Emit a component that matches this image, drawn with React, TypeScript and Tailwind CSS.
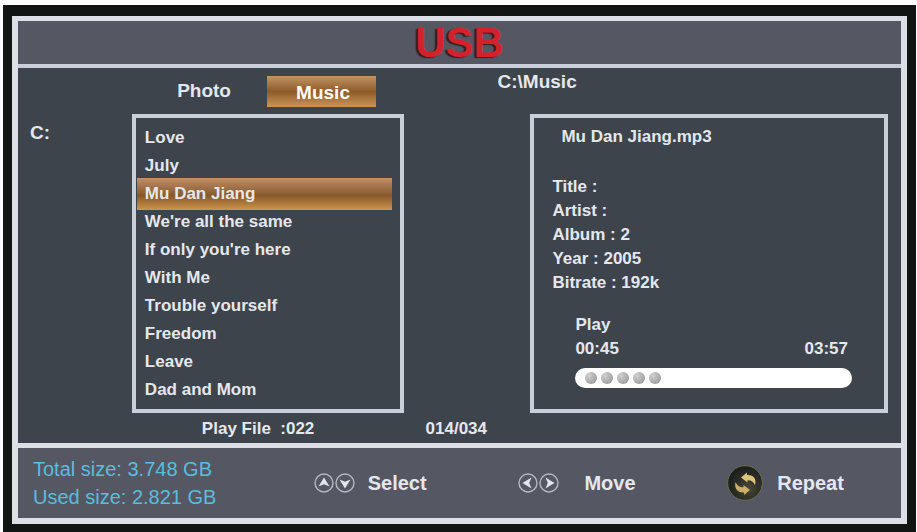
import { useState } from "react"

const songs = [
    'Love',
    'July',
    'Mu Dan Jiang',
    "We're all the same",
    "If only you're here",
    'With Me',
    'Trouble yourself',
    'Freedom',
    'Leave',
    'Dad and Mom'
]

type Direction = 'up' | 'down' | 'left' | 'right'

const rotations: Record<Direction, number> = {
    up: 0,
    right: 90,
    down: 180,
    left: 270
}

function ArrowIcon({ direction }: { direction: Direction }) {
    return (
        <svg width="20" height="20" viewBox="0 0 20 20" fill="none" aria-hidden="true">
            <circle cx="10" cy="10" r="9" stroke="#b4b8c2" strokeWidth="1.4" />
            <path
                d="M10 4.5 L15.5 13.5 L10 11.2 L4.5 13.5 Z"
                fill="#e2e5ec"
                transform={`rotate(${rotations[direction]} 10 10)`}
            />
        </svg>
    )
}

function RepeatIcon() {
    return (
        <svg width="36" height="38" viewBox="0 0 36 38" fill="none" aria-hidden="true">
            <defs>
                <radialGradient id="disc" cx="0.6" cy="0.65" r="0.6">
                    <stop offset="0" stopColor="#4a4838" />
                    <stop offset="0.6" stopColor="#2c2d26" />
                    <stop offset="1" stopColor="#1c201d" />
                </radialGradient>
            </defs>
            <circle cx="18" cy="19" r="17.3" fill="url(#disc)" stroke="#6b6a4c" strokeWidth="1" />
            <path d="M14 13.5 L20 8.5 L20 11 C26 10.5 30 14.5 28 21 C26.5 17.5 24 16 20.5 16.2 L20.5 18.5 Z" fill="#dcc47c" />
            <path d="M23 26 L17 31 L17 28.5 C10.5 29 7 24.5 8.5 18 C10 21.5 13 23.5 16.5 23.3 L16.5 21 Z" fill="#c8b068" />
        </svg>
    )
}

function Progress({ value }: { value: number }) {
    return (
        <div
            role="progressbar"
            aria-label="Playback"
            aria-valuenow={value}
            className="flex h-5 items-center gap-1 rounded-full bg-white px-[10px]"
        >
            {[1, 2, 3, 4, 5].map(dot => (
                <span
                    key={dot}
                    className="size-3 rounded-full bg-radial-[at_35%_30%] from-[#d2d2d2] to-[#8c8c8c]"
                />
            ))}
        </div>
    )
}

export default function App() {
    const [activeSong, setActiveSong] = useState('Mu Dan Jiang')
    const [tab, setTab] = useState('Music')

    return (
        <div className="flex min-h-screen flex-col bg-white pt-[5px] pl-[3px] pr-px font-['Liberation_Sans',Arial,sans-serif] font-bold text-[#e4e8ee]">
            <div className="flex flex-1 flex-col bg-[#111514] px-[9px] pt-[11px] pb-2">
                <div className="flex flex-1 flex-col border-x-6 border-t-5 border-b-6 border-[#dcdfe6] bg-[#3d444b]">
                    <header className="flex h-[47px] items-center justify-center border-b-4 border-[#c9ced8] bg-[#555763]">
                        <h1 className="text-[42px] leading-10 text-[#d3222a] [text-shadow:-2px_1px_1px_#3a1b20]">USB</h1>
                    </header>

                    <main className="grid flex-1 grid-cols-[114fr_272fr_127fr_358fr] grid-rows-[46px_1fr_30px] pr-[13px]">
                        <nav className="col-start-2 flex justify-end gap-2 pt-2 pr-7 text-[19px]">
                            {['Photo', 'Music'].map(name => (
                                <button
                                    key={name}
                                    type="button"
                                    onClick={() => setTab(name)}
                                    className={tab === name
                                        ? 'h-[31px] w-[109px] bg-linear-to-b from-[#c39564] via-[#8c5c28] to-[#cc9656] pt-[3px] pl-1 text-white'
                                        : 'h-[31px] w-[109px]'}
                                >
                                    {name}
                                </button>
                            ))}
                        </nav>
                        <p className="col-span-2 pl-[94px] text-[19px] leading-7">C:\Music</p>

                        <p className="pt-[5px] pl-3 text-[19px] leading-7">C:</p>
                        <ul className="border-4 border-[#c9ced8] pt-[6px] pr-2 pl-px text-[17px]">
                            {songs.map(song => (
                                <li key={song}>
                                    <button
                                        type="button"
                                        onClick={() => setActiveSong(song)}
                                        className={activeSong === song
                                            ? '-my-[2px] block h-8 w-full bg-linear-to-b from-[#c0906a] via-[#87592a] via-55% to-[#cf974c] pl-2 text-left'
                                            : 'block h-7 w-full pl-2 text-left'}
                                    >
                                        {song}
                                    </button>
                                </li>
                            ))}
                        </ul>
                        <section className="col-start-4 border-4 border-[#c9ced8] pt-[7px] pl-[18px] text-[17px] leading-6">
                            <h2 className="pl-[9px]">{activeSong}.mp3</h2>
                            <div className="pt-[26px]">
                                <p>Title :</p>
                                <p>Artist :</p>
                                <p>Album : 2</p>
                                <p>Year : 2005</p>
                                <p>Bitrate : 192k</p>
                            </div>
                            <div className="pt-[18px] pr-8 pl-[23px]">
                                <p>Play</p>
                                <div className="flex justify-between pr-1 pb-[7px]">
                                    <span>00:45</span>
                                    <span>03:57</span>
                                </div>
                                <Progress value={19} />
                            </div>
                        </section>

                        <p className="col-start-2 pl-[70px] text-[17px] leading-8 whitespace-pre">Play File  :022</p>
                        <p className="pl-[22px] text-[17px] leading-8">014/034</p>
                    </main>

                    <footer className="grid h-[75px] grid-cols-[281fr_205fr_209fr_174fr] items-center border-t-5 border-[#dcdfe6] bg-[#555763] pl-[15px] text-[20px]">
                        <div className="leading-7 font-normal text-[#5abddd]">
                            <p>Total size: 3.748 GB</p>
                            <p>Used size: 2.821 GB</p>
                        </div>
                        <button type="button" className="flex items-center gap-px">
                            <ArrowIcon direction="up" />
                            <ArrowIcon direction="down" />
                            <span className="pl-3">Select</span>
                        </button>
                        <button type="button" className="flex items-center gap-px">
                            <ArrowIcon direction="left" />
                            <ArrowIcon direction="right" />
                            <span className="pl-6">Move</span>
                        </button>
                        <button type="button" className="flex items-center gap-[14px]">
                            <RepeatIcon />
                            Repeat
                        </button>
                    </footer>
                </div>
            </div>
        </div>
    )
}
